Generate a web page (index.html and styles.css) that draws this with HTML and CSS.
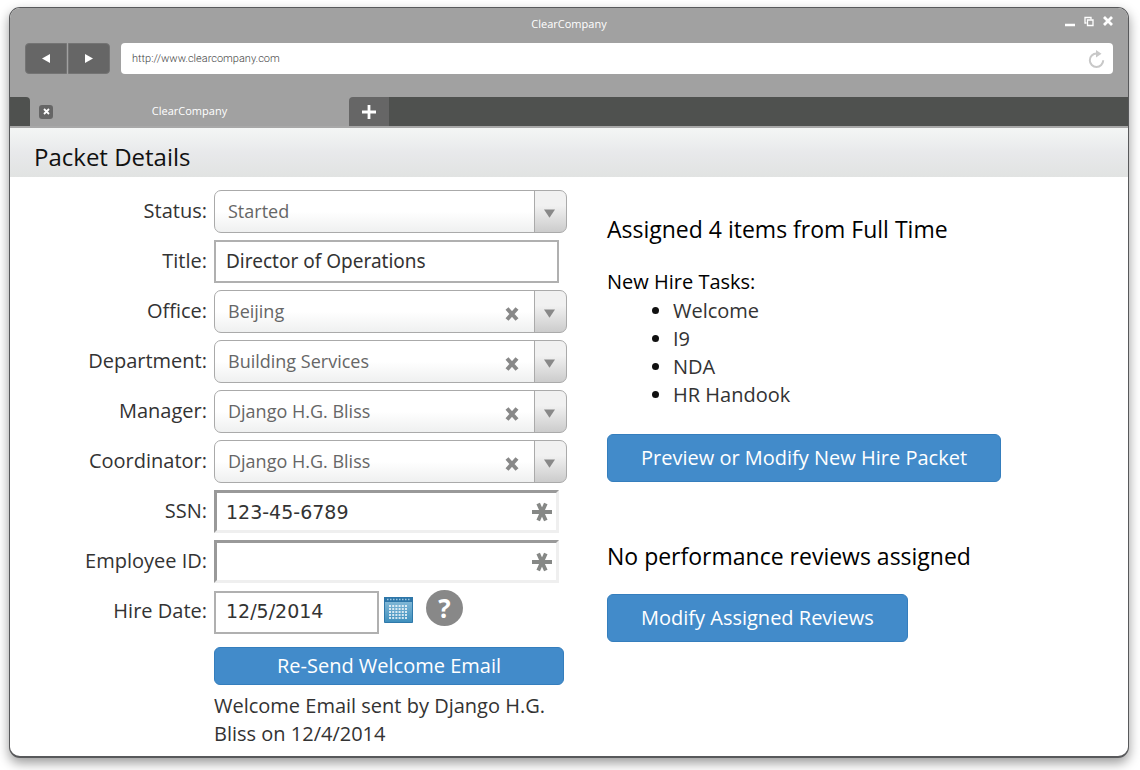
FILE: index.html
```
<!doctype html>
<html lang="en">
	<head>
		<meta charset="UTF-8">
		<title>ClearCompany</title>
		<meta name="viewport" content="width=device-width, initial-scale=1">
		<link rel="stylesheet" href="styles.css">
	</head>
	<body>
		<svg class="sprite" aria-hidden="true">
			<symbol id="arrow" viewBox="0 0 12 9"><path d="M0 0h12L6 9z" fill="#888"/></symbol>
			<symbol id="clear" viewBox="0 0 14 14"><path d="M2 1.5l10 11M12 1.5l-10 11" stroke="#888" stroke-width="4"/></symbol>
			<symbol id="star" viewBox="0 0 20 20"><path d="M0 10h20M6.2 1.500l7.600 17M13.800 1.500l-7.600 17" stroke="#868886" stroke-width="3.800"/></symbol>
		</svg>
		<div class="window">
			<header class="chrome">
				<div class="titlebar">
					<span class="titlebar-text">ClearCompany</span>
					<div class="controls">
						<button type="button" aria-label="Minimize"><svg width="10" height="11" viewBox="0 0 10 11"><path d="M0 9h10" stroke="#fff" stroke-width="2.400"/></svg></button>
						<button type="button" aria-label="Restore"><svg width="10" height="11" viewBox="0 0 10 11"><path d="M2.500 7H1V1.500H7v2" fill="none" stroke="#fff" stroke-width="1.300"/><path d="M3.500 4h5.500v5.500H3.500z" fill="none" stroke="#fff" stroke-width="1.300"/></svg></button>
						<button type="button" aria-label="Close"><svg width="10" height="11" viewBox="0 0 10 11"><path d="M1 1l8 8M9 1L1 9" stroke="#fff" stroke-width="2.800"/></svg></button>
					</div>
				</div>
				<div class="toolbar">
					<div class="nav">
						<button type="button" aria-label="Back"><svg width="8" height="9" viewBox="0 0 8 9"><path d="M8 0v9L0 4.500z" fill="#fff"/></svg></button>
						<button type="button" aria-label="Forward"><svg width="8" height="9" viewBox="0 0 8 9"><path d="M0 0v9l8-4.500z" fill="#fff"/></svg></button>
					</div>
					<div class="address">
						<input type="text" value="http://www.clearcompany.com" aria-label="Address">
						<button type="button" aria-label="Reload"><svg width="17" height="18" viewBox="0 0 17 18"><path d="M8.500 3.500a6.700 6.700 0 1 0 6.700 6.700" fill="none" stroke="#c8c8c8" stroke-width="2"/><path d="M8 0l5.500 3.800L8 7.500z" fill="#c8c8c8"/></svg></button>
					</div>
				</div>
				<div class="tabs">
					<div class="tab-edge"></div>
					<div class="tab">
						<button type="button" class="tab-close" aria-label="Close tab"><svg width="7" height="7" viewBox="0 0 7 7"><path d="M1 1l5 5M6 1L1 6" stroke="#fff" stroke-width="1.800"/></svg></button>
						<span class="tab-text">ClearCompany</span>
					</div>
					<button type="button" class="tab-new" aria-label="New tab"><svg width="14" height="14" viewBox="0 0 14 14"><path d="M7 0v14M0 7h14" stroke="#fff" stroke-width="2.800"/></svg></button>
					<div class="tab-rest"></div>
				</div>
			</header>
			<h1 class="page-title">Packet Details</h1>
			<main class="content">
				<form class="details">
					<label for="status">Status:</label>
					<div class="picker">
						<select id="status"><option>Started</option></select>
						<svg class="picker-arrow"><use href="#arrow"/></svg>
					</div>

					<label for="title">Title:</label>
					<input type="text" class="text" id="title" value="Director of Operations">

					<label for="office">Office:</label>
					<div class="picker">
						<select id="office"><option>Beijing</option></select>
						<button type="button" class="picker-clear" aria-label="Clear office"><svg><use href="#clear"/></svg></button>
						<svg class="picker-arrow"><use href="#arrow"/></svg>
					</div>

					<label for="department">Department:</label>
					<div class="picker">
						<select id="department"><option>Building Services</option></select>
						<button type="button" class="picker-clear" aria-label="Clear department"><svg><use href="#clear"/></svg></button>
						<svg class="picker-arrow"><use href="#arrow"/></svg>
					</div>

					<label for="manager">Manager:</label>
					<div class="picker">
						<select id="manager"><option>Django H.G. Bliss</option></select>
						<button type="button" class="picker-clear" aria-label="Clear manager"><svg><use href="#clear"/></svg></button>
						<svg class="picker-arrow"><use href="#arrow"/></svg>
					</div>

					<label for="coordinator">Coordinator:</label>
					<div class="picker">
						<select id="coordinator"><option>Django H.G. Bliss</option></select>
						<button type="button" class="picker-clear" aria-label="Clear coordinator"><svg><use href="#clear"/></svg></button>
						<svg class="picker-arrow"><use href="#arrow"/></svg>
					</div>

					<label for="ssn">SSN:</label>
					<div class="required">
						<input type="text" class="digits" id="ssn" value="123-45-6789">
						<svg><use href="#star"/></svg>
					</div>

					<label for="employee">Employee ID:</label>
					<div class="required">
						<input type="text" class="digits" id="employee">
						<svg><use href="#star"/></svg>
					</div>

					<label for="hired">Hire Date:</label>
					<div class="date">
						<input type="text" class="text digits" id="hired" value="12/5/2014">
						<button type="button" class="calendar" aria-label="Pick a date">
							<svg width="29" height="26" viewBox="0 0 29 26">
								<defs><linearGradient id="cal" x2="0" y2="1"><stop offset="0" stop-color="#8dbfdb"/><stop offset="1" stop-color="#3e8fbd"/></linearGradient></defs>
								<path d="M.5.5h28v25H.5z" fill="url(#cal)" stroke="#2f79aa"/>
								<path d="M0 0h29v5H0z" fill="#2d76a8"/>
								<path d="M3 2.500h23" stroke="#9cc8e2" stroke-width="1.500" stroke-dasharray="1.500 1.500"/>
								<path d="M5 9h19M5 12h19M5 15h19M5 18h19M5 21h19" stroke="#fff" stroke-width="1.700" stroke-dasharray="2 1.200"/>
							</svg>
						</button>
						<button type="button" class="help" aria-label="Help">?</button>
					</div>

					<div class="resend">
						<button type="button" class="btn btn-wide">Re-Send Welcome Email</button>
						<p>Welcome Email sent by Django H.G. Bliss on 12/4/2014</p>
					</div>
				</form>

				<section class="side">
					<h2>Assigned 4 items from Full Time</h2>
					<h3>New Hire Tasks:</h3>
					<ul>
						<li>Welcome</li>
						<li>I9</li>
						<li>NDA</li>
						<li>HR Handook</li>
					</ul>
					<button type="button" class="btn">Preview or Modify New Hire Packet</button>
					<h2 class="reviews">No performance reviews assigned</h2>
					<button type="button" class="btn">Modify Assigned Reviews</button>
				</section>
			</main>
		</div>
	</body>
</html>
```
FILE: styles.css
```
*{
	box-sizing: border-box;
}
body{
	display: flex;
	min-height: 100vh;
	margin: 0;
	padding: 7px 11px 13px 9px;
	background-color: #fff;
	color: #333;
	font-family: "Open Sans", "Noto Sans", sans-serif;
	font-size: 20px;
	line-height: 28px;
}
h1, h2, h3, p, ul{
	margin: 0;
	font-weight: 400;
}
button, input, select{
	margin: 0;
	padding: 0;
	border: none;
	background: none;
	color: inherit;
	font: inherit;
}
button{
	cursor: pointer;
}
svg{
	display: block;
}
.sprite{
	position: absolute;
	width: 0;
	height: 0;
}
.window{
	display: flex;
	flex: 1;
	flex-direction: column;
	overflow: hidden;
	border: 1px solid #58595b;
	border-bottom-width: 2px;
	border-radius: 11px;
	background-color: #fff;
	box-shadow: 0 5px 12px rgba(0,0,0,.4);
}

/* browser frame */
.chrome{
	background-color: #a1a1a1;
	color: #fff;
	font-size: 11px;
	line-height: 16px;
	text-rendering: geometricPrecision;
}
.titlebar{
	display: grid;
	grid-template-columns: 1fr auto 1fr;
	align-items: center;
	height: 35px;
	padding: 0 15px;
}
.titlebar-text{
	grid-column: 2;
	padding-bottom: 2px;
}
.controls{
	display: flex;
	justify-content: flex-end;
	gap: 9px;
	padding-bottom: 9px;
}
.toolbar{
	display: flex;
	gap: 11px;
	height: 54px;
	padding: 0 15px;
}
.nav{
	display: flex;
	gap: 1px;
}
.nav button{
	display: flex;
	align-items: center;
	justify-content: center;
	width: 42px;
	height: 31px;
	border: 1px solid #747474;
	background-color: #666;
}
.nav button:first-child{
	border-radius: 4px 0 0 4px;
}
.nav button:last-child{
	border-radius: 0 4px 4px 0;
}
.address{
	display: flex;
	flex: 1;
	align-items: center;
	height: 31px;
	padding: 0 8px 0 11px;
	border-radius: 4px;
	background-color: #fff;
}
.address input{
	flex: 1;
	color: #444;
	font-family: Roboto, "Liberation Sans", sans-serif;
	font-weight: 300;
	text-rendering: geometricPrecision;
}
.tabs{
	display: flex;
	height: 31px;
	border-bottom: 2px solid #a8a8a8;
	background-color: #a1a1a1;
}
.tab-edge{
	width: 20px;
	border-radius: 0 4px 0 0;
	background-color: #4f514f;
}
.tab{
	display: flex;
	align-items: center;
	width: 319px;
	padding: 0 9px;
}
.tab-close{
	display: flex;
	align-items: center;
	justify-content: center;
	width: 14px;
	height: 14px;
	border-radius: 3px;
	background-color: #666;
}
.tab-text{
	flex: 1;
	padding-right: 14px;
	text-align: center;
}
.tab-new{
	display: flex;
	align-items: center;
	justify-content: center;
	width: 40px;
	border-radius: 4px 0 0 0;
	background-color: #666;
}
.tab-rest{
	flex: 1;
	background-color: #4f514f;
}

/* page */
.page-title{
	height: 49px;
	padding: 13px 24px 0;
	background: linear-gradient(#f4f6f5, #e8e9eb 50%, #e1e3e2);
	color: #111;
	font-size: 24px;
	font-weight: 500;
	line-height: 32px;
}
.content{
	display: flex;
	gap: 40px;
	padding: 13px 24px 8px;
}
.details{
	display: grid;
	grid-template-columns: 173px 353px;
	grid-auto-rows: minmax(43px, auto);
	gap: 7px;
	align-items: center;
}
.details label{
	padding-bottom: 2px;
	text-align: right;
}
.picker{
	display: grid;
	grid-template-columns: 1fr 44px 32px;
	align-items: center;
	justify-items: center;
}
.picker select{
	grid-area: 1 / 1 / 2 / 4;
	width: 100%;
	height: 43px;
	padding: 0 76px 2px 13px;
	appearance: none;
	border: 1px solid #aaa;
	border-radius: 7px;
	background:
		linear-gradient(#aaa, #aaa) right 31px top / 1px 100% no-repeat,
		linear-gradient(#f1f1f1 35%, #ccc) right top / 32px 100% no-repeat,
		linear-gradient(#fff 50%, #eff0f0);
	color: #666;
	font-size: 18px;
}
.picker-clear{
	grid-area: 1 / 2;
	padding: 4px 2px 0 0;
}
.picker-clear svg{
	width: 14px;
	height: 14px;
}
.picker-arrow{
	grid-area: 1 / 3;
	width: 11px;
	height: 9px;
	margin: 4px 3px 0 0;
	pointer-events: none;
}
.text{
	width: 345px;
	height: 43px;
	padding: 0 10px 2px;
	border: 2px solid #b0b0b0;
	font-family: "Noto Sans", sans-serif;
	font-size: 19px;
}
.required{
	display: grid;
	grid-template-columns: 1fr 32px;
	align-items: center;
	width: 345px;
}
.required input{
	grid-area: 1 / 1 / 2 / 3;
	width: 100%;
	height: 43px;
	padding: 0 32px 0 9px;
	border: 3px solid;
	border-color: #999 #efefef #efefef #999;
}
.digits, .required .digits{
	font-family: "DejaVu Sans", sans-serif;
	font-size: 19px;
}
.required svg{
	grid-area: 1 / 2;
	width: 20px;
	height: 20px;
	margin-left: 5px;
}
.date{
	display: flex;
	align-items: center;
}
.date .text{
	width: 165px;
}
.calendar{
	margin: 0 13px 4px 5px;
}
.help{
	width: 37px;
	height: 36px;
	margin-bottom: 8px;
	border-radius: 50%;
	background-color: #888;
	color: #fff;
	font-size: 26px;
	font-weight: 700;
	line-height: 36px;
}
.resend{
	grid-column: 2;
	padding-top: 6px;
}
.resend p{
	padding-top: 7px;
}
.btn{
	height: 48px;
	padding: 0 33px;
	border: 1px solid #357ebd;
	border-radius: 6px;
	background-color: #428bca;
	color: #fff;
}
.btn-wide{
	width: 350px;
	height: 38px;
}
.side{
	flex: 1;
	padding-top: 22px;
	color: #333;
}
.side h2, .side h3{
	color: #000;
}
.side h2{
	font-size: 23px;
	font-weight: 500;
	line-height: 34px;
}
.side h3{
	padding-top: 22px;
	font-size: 20px;
}
.side ul{
	padding: 1px 0 25px 66px;
}
.side li::marker{
	color: #111;
}
.side .reviews{
	padding: 57px 0 21px;
}
```
